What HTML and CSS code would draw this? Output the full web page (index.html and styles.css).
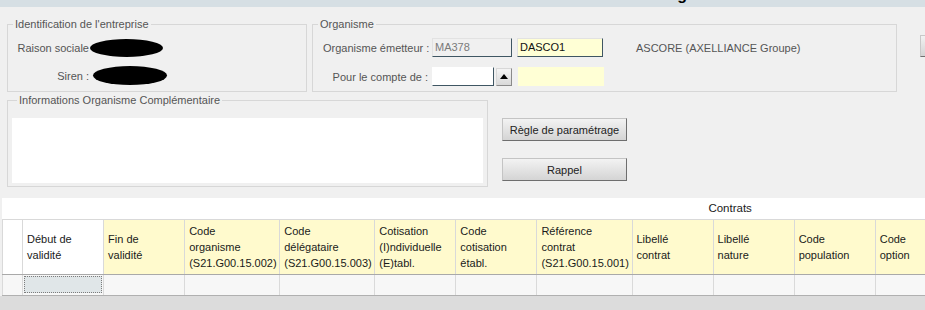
FILE: index.html
```html
<!DOCTYPE html>
<html lang="fr">
<head>
  <meta charset="UTF-8">
  <title>Paramétrage</title>
  <link rel="stylesheet" href="styles.css">
</head>
<body>
  <div class="titlebar"><span class="title">Paramétrage</span></div>

  <div class="top-row">
    <fieldset class="group ident">
      <legend>Identification de l'entreprise</legend>
      <div class="ident-grid">
        <span class="lbl">Raison sociale</span><span class="masked"></span>
        <span class="lbl">Siren :</span><span class="masked second"></span>
      </div>
    </fieldset>

    <fieldset class="group organisme">
      <legend>Organisme</legend>
      <div class="org-grid">
        <span class="lbl">Organisme émetteur :</span>
        <div class="line">
          <span class="field code">MA378</span>
          <span class="field yellow">DASCO1</span>
          <span class="org-name">ASCORE (AXELLIANCE Groupe)</span>
        </div>
        <span class="lbl">Pour le compte de :</span>
        <div class="line">
          <span class="field blank"></span>
          <button class="spin"><svg width="8" height="5" viewBox="0 0 8 5"><path d="M0 5 L4 0 L8 5 Z" fill="#000"/></svg></button>
          <span class="field yellow flat"></span>
        </div>
      </div>
    </fieldset>

    <button class="edge-btn"></button>
  </div>

  <div class="mid-row">
    <fieldset class="group infos">
      <legend>Informations Organisme Complémentaire</legend>
      <div class="memo"></div>
    </fieldset>
    <div class="actions">
      <button class="btn">Règle de paramétrage</button>
      <button class="btn">Rappel</button>
    </div>
  </div>

  <div class="grid-wrap">
    <table class="grid">
      <colgroup>
        <col style="width:20px"><col style="width:81px"><col style="width:81px">
        <col style="width:95px"><col style="width:95px"><col style="width:81px">
        <col style="width:81px"><col style="width:95px"><col style="width:81px">
        <col style="width:81px"><col style="width:81px"><col style="width:81px">
        <col style="width:129px">
      </colgroup>
      <tr class="band">
        <td colspan="5"></td>
        <td colspan="8">Contrats</td>
      </tr>
      <tr class="head">
        <th class="plain"></th>
        <th class="plain">Début de<br>validité</th>
        <th>Fin de<br>validité</th>
        <th>Code<br>organisme<br>(S21.G00.15.002)</th>
        <th>Code<br>délégataire<br>(S21.G00.15.003)</th>
        <th>Cotisation<br>(I)ndividuelle<br>(E)tabl.</th>
        <th>Code<br>cotisation<br>établ.</th>
        <th>Référence<br>contrat<br>(S21.G00.15.001)</th>
        <th>Libellé<br>contrat</th>
        <th>Libellé<br>nature</th>
        <th>Code<br>population</th>
        <th>Code<br>option</th>
        <th></th>
      </tr>
      <tr class="row">
        <td></td>
        <td><div class="current"></div></td>
        <td></td><td></td><td></td><td></td><td></td>
        <td></td><td></td><td></td><td></td><td></td><td></td>
      </tr>
    </table>
  </div>

  <div class="footer"></div>
</body>
</html>
```

FILE: styles.css
```css
* { box-sizing: border-box; }

html, body {
  margin: 0;
  width: 925px;
  height: 310px;
  overflow: hidden;
}

body {
  background-color: #f0f0f0;
  font-family: "Liberation Sans", Arial, sans-serif;
  font-size: 11px;
  color: #555;
}

.titlebar {
  height: 7px;
  overflow: hidden;
  background-color: #d6dfe4;
}

.title {
  display: block;
  margin-top: -13px;
  padding-left: 599px;
  font-size: 16px;
  line-height: 16px;
  font-weight: bold;
  color: #000;
}

/* group boxes */
.group {
  margin: 0;
  padding: 0;
  min-width: 0;
  border: 1px solid #d7d7d7;
  flex-shrink: 0;
}

.group legend {
  margin-left: 5px;
  padding: 0 2px;
  line-height: 13px;
  color: #555;
}

.top-row {
  display: flex;
  align-items: flex-start;
  margin-top: 11px;
}

.ident {
  margin-left: 7px;
  width: 300px;
}

.ident-grid {
  display: grid;
  grid-template-columns: 72px 80px;
  grid-auto-rows: 19px;
  row-gap: 9px;
  padding: 7px 0 6px 9px;
  align-items: center;
}

.lbl {
  text-align: right;
  white-space: nowrap;
}

.masked {
  width: 73px;
  height: 18px;
  margin-left: 1px;
  border-radius: 50%;
  background-color: #000;
}

.masked.second {
  width: 74px;
  height: 19px;
  margin-left: 4px;
  margin-top: -1px;
}

.organisme {
  margin-left: 5px;
  width: 585px;
}

.org-grid {
  display: grid;
  grid-template-columns: 105px 1fr;
  grid-auto-rows: 19px;
  row-gap: 10px;
  column-gap: 4px;
  padding: 7px 0 5px 10px;
  align-items: center;
}

.line {
  display: flex;
  align-items: center;
  height: 19px;
}

.field {
  height: 19px;
  line-height: 17px;
  padding-left: 2px;
  border: 1px solid;
  border-color: #e2e2e2 #3f5663 #3f5663 #e2e2e2;
}

.field.code {
  width: 80px;
  color: #7a7a7a;
  background-color: #f0f0f0;
}

.field.yellow {
  width: 86px;
  margin-left: 5px;
  color: #111;
  background-color: #ffffd5;
}

.field.flat {
  border: none;
  margin-left: 6px;
}

.field.blank {
  width: 62px;
  background-color: #fff;
  border-color: #fff #3f5663 #3f5663 #fff;
}

.org-name {
  margin-left: 33px;
  color: #555;
}

.spin {
  width: 16px;
  height: 18px;
  margin-left: 2px;
  padding: 0;
  border: 1px solid;
  border-color: #d8d8d8 #8a8a8a #8a8a8a #d8d8d8;
  background: linear-gradient(#f4f4f4, #d9d9d9);
  display: flex;
  align-items: center;
  justify-content: center;
}

.edge-btn {
  flex-shrink: 0;
  width: 100px;
  height: 22px;
  margin-left: 23px;
  margin-top: 17px;
  padding: 0;
  border: 1px solid;
  border-color: #c8c8c8 #707070 #707070 #c8c8c8;
  background: linear-gradient(#f2f2f2, #d3d3d3);
}

/* second row */
.mid-row {
  display: flex;
  align-items: flex-start;
  margin-top: 2px;
}

.infos {
  margin-left: 7px;
  width: 481px;
  padding: 11px 4px 3px 4px;
}

.memo {
  height: 65px;
  background-color: #fff;
}

.actions {
  display: flex;
  flex-direction: column;
  gap: 17px;
  margin-left: 14px;
  margin-top: 24px;
}

.btn {
  width: 125px;
  height: 23px;
  padding: 0;
  font-family: "Liberation Sans", Arial, sans-serif;
  font-size: 11px;
  color: #222;
  border: 1px solid;
  border-color: #c4c4c4 #6e6e6e #6e6e6e #c4c4c4;
  background: linear-gradient(#f3f3f3, #d4d4d4);
}

/* grid */
.grid-wrap {
  margin: 11px 0 0 2px;
  height: 98px;
  overflow: hidden;
  background-color: #fff;
}

.grid {
  table-layout: fixed;
  border-collapse: collapse;
  width: 1084px;
  font-size: 11px;
  color: #1a1a1a;
}

.band td {
  height: 21px;
  padding: 0;
  text-align: center;
  vertical-align: middle;
  font-size: 11.5px;
}

.head th {
  height: 55px;
  padding: 0 2px 0 4px;
  text-align: left;
  vertical-align: middle;
  font-weight: normal;
  line-height: 16px;
  white-space: nowrap;
  overflow: hidden;
  background-color: #fffacd;
  border: 1px solid #d9d9d9;
  border-bottom: 1px solid #a9a9a9;
}

.head th.plain {
  background-color: #fff;
}

.row td {
  height: 21px;
  padding: 0;
  background-color: #f7f7f7;
  border-left: 1px solid #dadada;
  border-right: 1px solid #dadada;
  border-bottom: 1px solid #b0b0b0;
}

.current {
  height: 17px;
  margin: 0 1px 0 1px;
  border: 1px dotted #7c7c7c;
  background-color: #e0e6e8;
}

.footer {
  height: 20px;
  background-color: #dcdcdc;
}
```
